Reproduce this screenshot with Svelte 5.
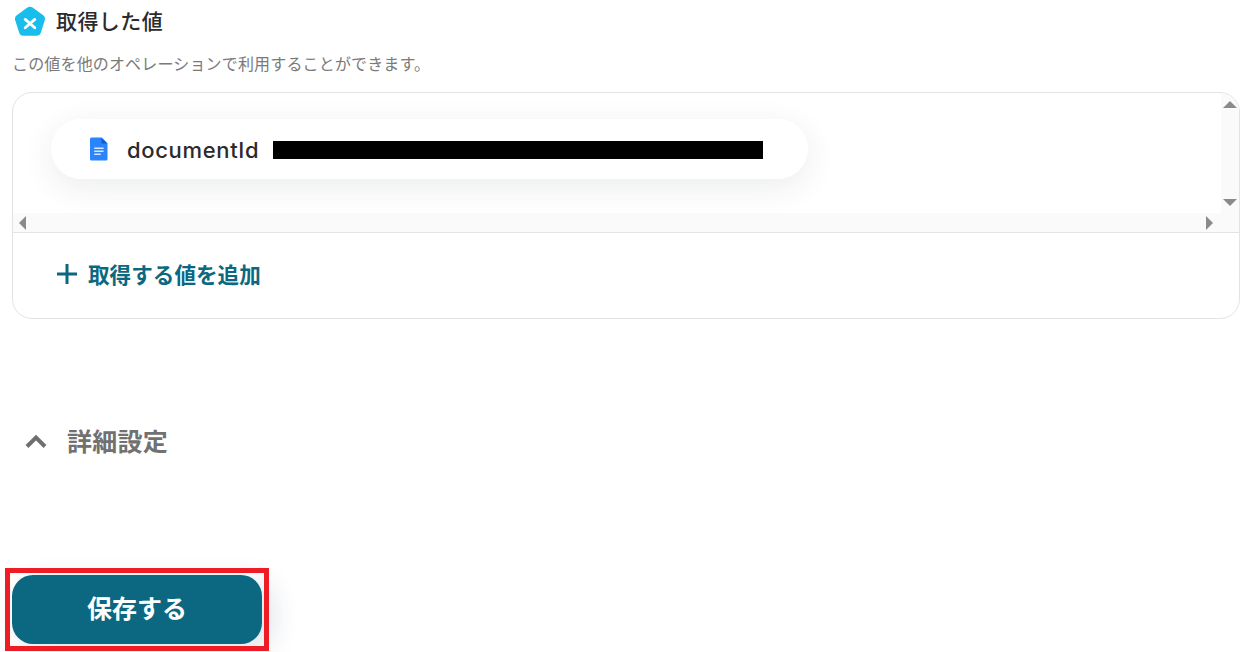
<script>
  const title = '取得した値';
  const desc = 'この値を他のオペレーションで利用することができます。';
</script>

<main class="page">
  <header class="head">
    <svg class="logo" viewBox="0 0 32 32" width="32" height="32" aria-hidden="true">
      <path d="M13.4 1.6a4.4 4.4 0 0 1 5.2 0l10.6 7.7a4.4 4.4 0 0 1 1.6 4.9l-4 12.5a4.4 4.4 0 0 1-4.2 3H9.4a4.4 4.4 0 0 1-4.2-3l-4-12.5a4.4 4.4 0 0 1 1.6-4.9z" fill="#19bdec"/>
      <path d="M11.2 13.4l9.6 8.4M20.8 13.4l-9.6 8.4" stroke="#fff" stroke-width="2.8" stroke-linecap="round"/>
    </svg>
    <h2 class="title">{title}</h2>
  </header>
  <p class="desc">{desc}</p>

  <section class="card">
    <div class="scroller">
      <div class="scroll-main">
        <div class="pill">
          <svg class="doc" viewBox="0 0 18 24" width="18" height="24" aria-hidden="true">
            <path d="M1.5 0.5H11.5L17.5 6.5V22a1.5 1.5 0 0 1-1.5 1.5H1.5A1.5 1.5 0 0 1 0 22V2A1.5 1.5 0 0 1 1.5 0.5z" fill="#2a84fc"/>
            <path d="M11.5 0.5L17.5 6.5H11.5z" fill="#0f5fd0"/>
            <path d="M4.2 10.5h9.4v1.4H4.2zM4.2 13.5h9.4v1.4H4.2zM4.2 16.5h6.6v1.4H4.2z" fill="#d6e6ff"/>
          </svg>
          <span class="key">documentId</span>
          <span class="redact"></span>
        </div>
      </div>
      <div class="vbar">
        <span class="arrow up"></span>
        <span class="arrow down"></span>
      </div>
      <div class="hbar">
        <span class="arrow left"></span>
        <span class="arrow right"></span>
      </div>
    </div>
    <div class="add">
      <svg viewBox="0 0 22 22" width="22" height="22" aria-hidden="true">
        <path d="M11 1v20M1 11h20" stroke="#0b6880" stroke-width="3" fill="none"/>
      </svg>
      <span>取得する値を追加</span>
    </div>
  </section>

  <div class="detail">
    <svg viewBox="0 0 24 16" width="24" height="16" aria-hidden="true">
      <path d="M3 13.5L12 4.5l9 9" stroke="#6f6f6f" stroke-width="4" fill="none"/>
    </svg>
    <span class="detail-label">詳細設定</span>
  </div>

  <div class="actions">
    <button class="save">保存する</button>
    <span class="mark"></span>
  </div>
</main>

<style>
  :global(body) {
    margin: 0;
    background: #fff;
    overflow: hidden;
  }
  .page {
    width: 1246px;
    height: 652px;
    box-sizing: border-box;
    padding: 6px 6px 0 12px;
    font-family: "Noto Sans CJK JP", "Noto Sans", sans-serif;
    color: #2b2b2b;
    overflow: hidden;
  }
  .head {
    display: flex;
    align-items: center;
    gap: 10px;
    height: 32px;
    padding-left: 2px;
  }
  .logo { flex: none; }
  .title {
    margin: -4px 0 0;
    font-size: 21px;
    line-height: 30px;
    font-weight: 500;
    letter-spacing: 0.02em;
  }
  .desc {
    margin: 14px 0 0;
    font-size: 16px;
    line-height: 22px;
    letter-spacing: 0.01em;
    color: #7a7a7a;
  }
  .card {
    margin-top: 18px;
    width: 1228px;
    height: 227px;
    box-sizing: border-box;
    border: 1px solid #e3e3e3;
    border-radius: 20px;
    overflow: hidden;
  }
  .scroller {
    display: grid;
    grid-template-columns: 1fr 18px;
    grid-template-rows: 120px 19px;
    height: 139px;
    border-bottom: 1px solid #e3e3e3;
  }
  .scroll-main {
    padding: 26px 0 0 38px;
    overflow: hidden;
  }
  .pill {
    display: flex;
    align-items: center;
    width: 757px;
    height: 60px;
    box-sizing: border-box;
    padding: 2px 0 0 39px;
    border-radius: 30px;
    background: #fff;
    box-shadow: 0 8px 32px rgba(30, 40, 60, 0.09);
  }
  .doc {
    flex: none;
    margin-top: -2px;
  }
  .key {
    margin-left: 19px;
    font-family: Inter, "Liberation Sans", sans-serif;
    font-size: 22px;
    font-weight: 500;
    letter-spacing: 0.03em;
    margin-bottom: 1px;
    color: #2b2b2b;
  }
  .redact {
    width: 490px;
    height: 18px;
    margin-left: 14px;
    background: #000;
  }
  .vbar {
    grid-row: 1 / 3;
    grid-column: 2;
    background: #fafafa;
    display: flex;
    flex-direction: column;
    justify-content: space-between;
    align-items: center;
    padding: 8px 0 26px;
  }
  .hbar {
    grid-row: 2;
    grid-column: 1;
    background: #fafafa;
    display: flex;
    justify-content: space-between;
    align-items: center;
    padding: 0 8px 0 6px;
  }
  .arrow {
    width: 0;
    height: 0;
    border-style: solid;
    border-color: transparent;
  }
  .up { border-width: 0 7px 7px; border-bottom-color: #8a8a8a; }
  .down { border-width: 7px 7px 0; border-top-color: #8a8a8a; }
  .left { border-width: 7px 7px 7px 0; border-right-color: #8a8a8a; }
  .right { border-width: 7px 0 7px 7px; border-left-color: #8a8a8a; }
  .add {
    display: flex;
    align-items: center;
    gap: 10px;
    height: 81px;
    padding-left: 43px;
    font-size: 21.6px;
    font-weight: 700;
    letter-spacing: 0;
    color: #0b6880;
  }
  .detail {
    display: flex;
    align-items: center;
    gap: 20px;
    height: 34px;
    margin-top: 105px;
    padding-left: 12px;
    font-size: 25px;
    font-weight: 700;
    letter-spacing: 0.01em;
    color: #717171;
  }
  .detail-label {
    margin-bottom: 2px;
    margin-left: -1px;
  }
  .actions {
    position: relative;
    margin-top: 117px;
    width: 250px;
    height: 69px;
  }
  .save {
    display: block;
    width: 250px;
    height: 69px;
    padding: 0 0 4px;
    border: 0;
    border-radius: 21px;
    background: #0b6880;
    color: #fff;
    font: 700 25px/1 "Noto Sans CJK JP", sans-serif;
    box-shadow: 10px 6px 28px rgba(30, 50, 80, 0.14);
  }
  .mark {
    position: absolute;
    left: -7px;
    top: -7px;
    width: 264px;
    height: 83px;
    box-sizing: border-box;
    border: 5px solid #ee1c25;
    pointer-events: none;
  }
</style>
